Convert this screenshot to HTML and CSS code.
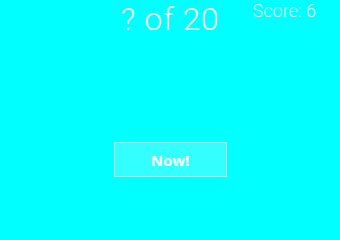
FILE: index.html
```html
<!DOCTYPE html>
<html>
<head>
<meta charset="utf-8">
<link rel="stylesheet" href="styles.css">
</head>
<body>
<div class="app">
  <header class="top">
    <div class="spacer"></div>
    <div class="counter">? of 20</div>
    <div class="score">Score: 6</div>
  </header>
  <main class="stage">
    <button class="now">Now!</button>
  </main>
</div>
</body>
</html>
```
FILE: styles.css
```css
html, body {
  margin: 0;
  padding: 0;
  background: #00ffff;
}
.app {
  width: 340px;
  height: 213px;
  overflow: hidden;
  display: flex;
  flex-direction: column;
  font-family: Roboto, "Open Sans", sans-serif;
  color: #ffffff;
}
.top {
  display: grid;
  grid-template-columns: 1fr auto 1fr;
  align-items: start;
  height: 40px;
}
.counter {
  font-size: 32px;
  font-weight: 300;
  line-height: normal;
  letter-spacing: 0.6px;
}
.score {
  justify-self: end;
  padding-right: 24px;
  font-size: 18px;
  font-weight: 300;
  line-height: normal;
  color: rgba(255, 255, 255, 0.85);
}
.stage {
  flex: 1;
  display: flex;
  justify-content: center;
  padding-top: 102px;
}
.now {
  width: 113px;
  height: 35px;
  box-sizing: border-box;
  background: rgba(255, 255, 255, 0.2);
  border: 1px solid rgba(255, 255, 255, 0.45);
  color: #ffffff;
  font-family: "Open Sans", Roboto, sans-serif;
  font-weight: 700;
  font-size: 15px;
  padding: 0;
}
```
